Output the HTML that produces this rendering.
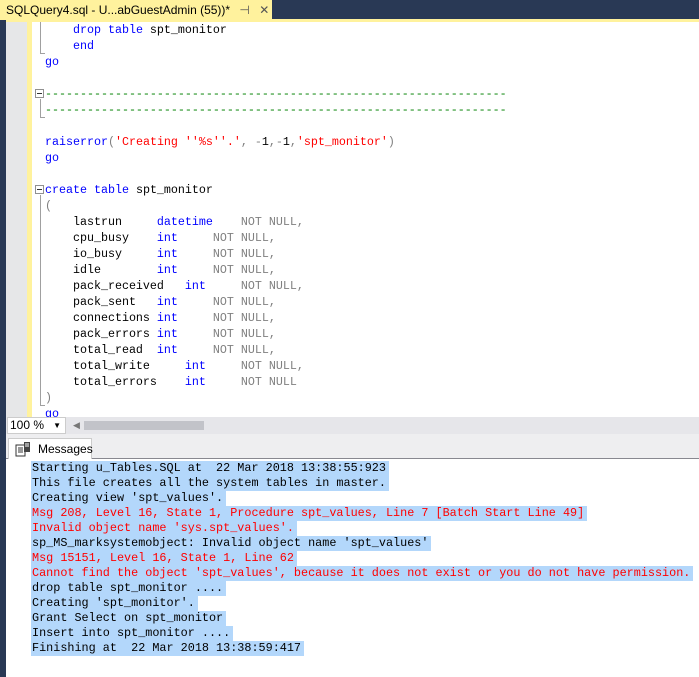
<!DOCTYPE html>
<html><head><meta charset="utf-8"><style>
*{margin:0;padding:0;box-sizing:border-box}
body{width:699px;height:677px;overflow:hidden;background:#fff;position:relative;font-family:"Liberation Sans",sans-serif}
.nav{position:absolute;left:0;top:0;width:699px;height:20px;background:#293955}
.tab{position:absolute;left:0;top:0;width:272px;height:21px;background:#fff29d;font-size:12px;color:#000;padding:3px 0 0 6px;white-space:nowrap}
.yline{position:absolute;left:0;top:19px;width:699px;height:3px;background:#fff29d}
.lstrip{position:absolute;left:0;top:20px;width:6px;height:657px;background:#293955}
.gutter{position:absolute;left:6px;top:22px;width:21px;height:395px;background:#e6e7e8}
.ybar{position:absolute;left:27px;top:22px;width:5px;height:395px;background:#fff29d}
.code{position:absolute;left:45px;top:22px;font-family:"Liberation Mono",monospace;font-size:11.67px;line-height:16px;white-space:pre;color:#000}
.k{color:#0000ff}.s{color:#ff0000}.c{color:#008000}.g{color:#808080}
.ol{position:absolute;border-left:1px solid #a0a0a0}
.box{position:absolute;width:9px;height:9px;border:1px solid #909090;background:#fff}
.box:after{content:"";position:absolute;left:1px;top:3px;width:5px;height:1px;background:#333}
.zbar{position:absolute;left:6px;top:417px;width:693px;height:17px;background:#e6e6ea}
.combo{position:absolute;left:7px;top:417px;width:59px;height:17px;background:#fff;border:1px solid #ccc;font-size:12px;padding:0 0 0 2px;line-height:15px}
.thumb{position:absolute;left:84px;top:421px;width:120px;height:9px;background:#c2c3c9}
.trow{position:absolute;left:6px;top:434px;width:693px;height:25px;background:#eeeef0;border-bottom:1px solid #888890}
.mtab{position:absolute;left:8px;top:438px;width:84px;height:21px;background:#fff;border:1px solid #ccc;border-bottom:none;font-size:12px;padding:3px 0 0 29px}
.msg{position:absolute;left:31px;top:461px;font-family:"Liberation Mono",monospace;font-size:11.8px;line-height:15px}
.msg div{height:15px;white-space:nowrap}
.msg span{background:#b3d7fb;padding:0 3px 0 1px;display:inline-block;height:15px;white-space:pre}
.r{color:#ff0000}
</style></head><body>
<div class="nav"></div>
<div class="tab">SQLQuery4.sql - U...abGuestAdmin (55))* <span style="color:#555;margin-left:6px">⊣</span> <span style="color:#555;margin-left:6px">✕</span></div>
<div class="yline"></div>
<div class="lstrip"></div>
<div class="gutter"></div>
<div class="ybar"></div>
<div class="ol" style="left:40px;top:22px;height:32px"></div>
<div style="position:absolute;left:40px;top:53px;width:5px;border-top:1px solid #a0a0a0"></div>
<div class="box" style="left:35px;top:89px"></div>
<div class="ol" style="left:40px;top:99px;height:19px"></div>
<div style="position:absolute;left:40px;top:117px;width:5px;border-top:1px solid #a0a0a0"></div>
<div class="box" style="left:35px;top:185px"></div>
<div class="ol" style="left:40px;top:195px;height:211px"></div>
<div style="position:absolute;left:40px;top:405px;width:5px;border-top:1px solid #a0a0a0"></div>
<div class="code">    <span class="k">drop table</span> spt_monitor
    <span class="k">end</span>
<span class="k">go</span>

<span class="c">------------------------------------------------------------------</span>
<span class="c">------------------------------------------------------------------</span>

<span class="k">raiserror</span><span class="g">(</span><span class="s">'Creating ''%s''.'</span><span class="g">,</span> <span class="g">-</span>1<span class="g">,-</span>1<span class="g">,</span><span class="s">'spt_monitor'</span><span class="g">)</span>
<span class="k">go</span>

<span class="k">create table</span> spt_monitor
<span class="g">(</span>
    lastrun     <span class="k">datetime</span>    <span class="g">NOT NULL,</span>
    cpu_busy    <span class="k">int</span>     <span class="g">NOT NULL,</span>
    io_busy     <span class="k">int</span>     <span class="g">NOT NULL,</span>
    idle        <span class="k">int</span>     <span class="g">NOT NULL,</span>
    pack_received   <span class="k">int</span>     <span class="g">NOT NULL,</span>
    pack_sent   <span class="k">int</span>     <span class="g">NOT NULL,</span>
    connections <span class="k">int</span>     <span class="g">NOT NULL,</span>
    pack_errors <span class="k">int</span>     <span class="g">NOT NULL,</span>
    total_read  <span class="k">int</span>     <span class="g">NOT NULL,</span>
    total_write     <span class="k">int</span>     <span class="g">NOT NULL,</span>
    total_errors    <span class="k">int</span>     <span class="g">NOT NULL</span>
<span class="g">)</span>
<span class="k">go</span></div>
<div class="zbar"></div>
<div class="combo">100 %<span style="position:absolute;right:4px;top:0;font-size:8px">▼</span></div>
<div style="position:absolute;left:73px;top:420px;font-size:9px;color:#777">◀</div>
<div class="thumb"></div>
<div class="trow"></div>
<div class="mtab"><svg style="position:absolute;left:6px;top:3px" width="16" height="15" viewBox="0 0 16 15"><rect x="1" y="3" width="9" height="11" fill="#fff" stroke="#333"/><path d="M3 6h5M3 8h5M3 10h5" stroke="#333"/><rect x="9" y="0" width="6" height="10" fill="#444"/><path d="M10 2h4M10 4h4" stroke="#fff"/></svg>Messages</div>
<div class="msg"><div><span>Starting u_Tables.SQL at  22 Mar 2018 13:38:55:923</span></div><div><span>This file creates all the system tables in master.</span></div><div><span>Creating view 'spt_values'.</span></div><div><span class="r">Msg 208, Level 16, State 1, Procedure spt_values, Line 7 [Batch Start Line 49]</span></div><div><span class="r">Invalid object name 'sys.spt_values'.</span></div><div><span>sp_MS_marksystemobject: Invalid object name 'spt_values'</span></div><div><span class="r">Msg 15151, Level 16, State 1, Line 62</span></div><div><span class="r">Cannot find the object 'spt_values', because it does not exist or you do not have permission.</span></div><div><span>drop table spt_monitor ....</span></div><div><span>Creating 'spt_monitor'.</span></div><div><span>Grant Select on spt_monitor</span></div><div><span>Insert into spt_monitor ....</span></div><div><span>Finishing at  22 Mar 2018 13:38:59:417</span></div></div>
</body></html>
